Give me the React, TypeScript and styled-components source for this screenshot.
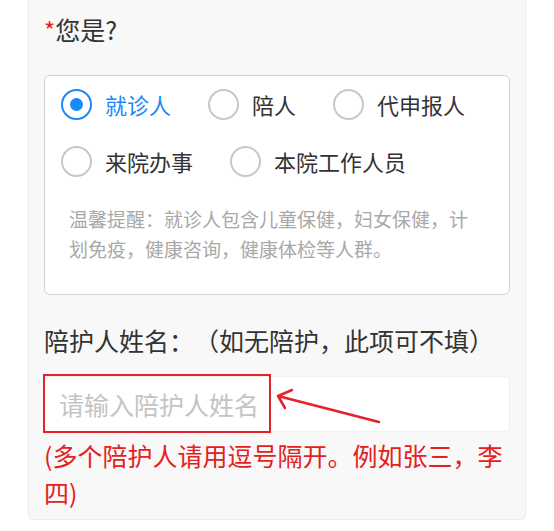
import styled, { createGlobalStyle } from 'styled-components'

const options = ['就诊人', '陪人', '代申报人', '来院办事', '本院工作人员']

const GlobalStyle = createGlobalStyle`
  body {
    margin: 0;
    background: #ffffff;
    font-family: "Noto Sans CJK SC", "Noto Sans", sans-serif;
    text-spacing-trim: space-all;
  }
`

function App() {
  const selected = '就诊人'

  return (
    <Page>
      <GlobalStyle />
      <Card>
        <Title>
          <Star>*</Star>您是?
        </Title>
        <ChoiceBox>
          <RadioGroup>
            {options.map((option) => (
              <RadioItem key={option}>
                <Circle $checked={option === selected}>{option === selected && <Dot />}</Circle>
                <RadioLabel $checked={option === selected}>{option}</RadioLabel>
              </RadioItem>
            ))}
          </RadioGroup>
          <Hint>温馨提醒：就诊人包含儿童保健，妇女保健，计划免疫，健康咨询，健康体检等人群。</Hint>
        </ChoiceBox>
        <FieldLabel>陪护人姓名：（如无陪护，此项可不填）</FieldLabel>
        <InputWrap>
          <Input placeholder="请输入陪护人姓名" />
          <Highlight />
          <Arrow width="120" height="60" viewBox="0 0 120 60">
            <path d="M335 46 L234 20 M248 14 L234 20 L241 32" transform="translate(-230 -10)" />
          </Arrow>
        </InputWrap>
        <ErrorText>(多个陪护人请用逗号隔开。例如张三，李四)</ErrorText>
      </Card>
    </Page>
  )
}

export default App

const Page = styled.div`
  padding: 0 28px;
`

const Card = styled.div`
  background: #f8f8f8;
  border: 1px solid #ececec;
  border-top: none;
  border-radius: 0 0 6px 6px;
  padding: 11px 15px 8px;
`

const Title = styled.div`
  font-size: 25px;
  line-height: 36px;
  color: #333;
`

const Star = styled.span`
  color: #f01818;
  font-size: 24px;
`

const ChoiceBox = styled.div`
  margin-top: 27px;
  background: #fff;
  border: 1px solid #d2d2d2;
  border-radius: 6px;
  padding: 12px 16px 30px;
`

const RadioGroup = styled.div`
  display: flex;
  flex-wrap: wrap;
  gap: 25px 37px;
`

const RadioItem = styled.label`
  display: flex;
  align-items: center;
  gap: 13px;
  height: 32px;
`

const Circle = styled.span<{ $checked: boolean }>`
  box-sizing: border-box;
  width: 31px;
  height: 31px;
  border-radius: 50%;
  border: 2px solid ${({ $checked }) => ($checked ? '#1989fa' : '#c8c8c8')};
  display: flex;
  align-items: center;
  justify-content: center;
`

const Dot = styled.span`
  width: 13px;
  height: 13px;
  border-radius: 50%;
  background: #1989fa;
`

const RadioLabel = styled.span<{ $checked: boolean }>`
  font-size: 22px;
  color: ${({ $checked }) => ($checked ? '#1989fa' : '#333')};
`

const Hint = styled.div`
  margin: 27px 15px 0 8px;
  font-size: 19px;
  line-height: 30px;
  color: #a8a8a8;
`

const FieldLabel = styled.div`
  margin-top: 27px;
  font-size: 25px;
  line-height: 36px;
  color: #333;
`

const InputWrap = styled.div`
  position: relative;
  margin-top: 18px;
`

const Input = styled.input`
  box-sizing: border-box;
  display: block;
  width: 100%;
  height: 56px;
  border: 1px solid #f0f0f0;
  border-radius: 6px;
  background: #fff;
  padding: 0 14px;
  font-family: inherit;
  font-size: 25px;
  outline: none;

  &::placeholder {
    color: #c4c4c4;
  }
`

const Highlight = styled.div`
  position: absolute;
  left: -1px;
  top: -2px;
  width: 228px;
  height: 59px;
  box-sizing: border-box;
  border: 2.5px solid #e5222a;
  pointer-events: none;
`

const Arrow = styled.svg`
  position: absolute;
  left: 230px;
  top: 10px;
  fill: none;
  stroke: #e5222a;
  stroke-width: 2.5;
  stroke-linecap: round;
  stroke-linejoin: round;
`

const ErrorText = styled.div`
  margin-top: 5px;
  font-size: 25px;
  line-height: 37px;
  color: #e52020;
`
